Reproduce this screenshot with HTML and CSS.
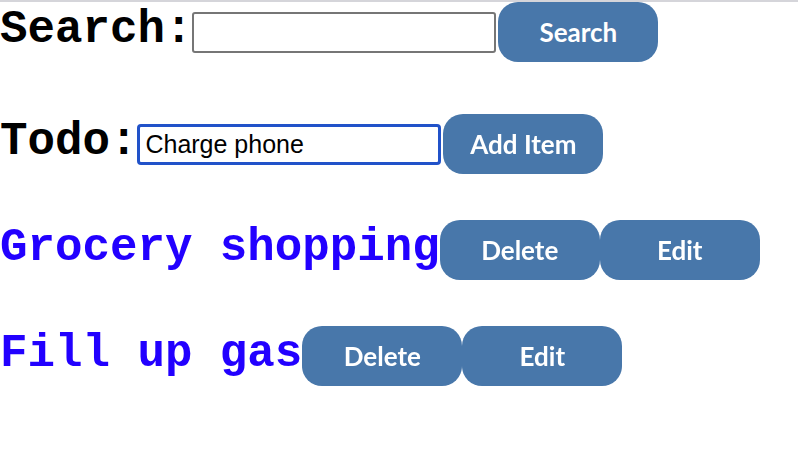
FILE: index.html
```html
<!DOCTYPE html>
<html>
<head>
<meta charset="utf-8">
<link rel="stylesheet" href="styles.css">
</head>
<body>
<div class="topline"></div>
<main class="app">
  <div class="row row-search">
    <label class="label">Search:</label><input class="field" type="text"><button class="btn">Search</button>
  </div>
  <div class="row row-todo">
    <label class="label">Todo:</label><input class="field field-focus" type="text" value="Charge phone" autofocus><button class="btn">Add Item</button>
  </div>
  <div class="row row-item">
    <span class="item">Grocery shopping</span><button class="btn">Delete</button><button class="btn">Edit</button>
  </div>
  <div class="row row-item">
    <span class="item">Fill up gas</span><button class="btn">Delete</button><button class="btn">Edit</button>
  </div>
</main>
</body>
</html>
```

FILE: styles.css
```css
html, body {
  margin: 0;
  padding: 0;
  background: #ffffff;
}

.topline {
  height: 2px;
  background: #d5d5da;
}

.app {
  display: flex;
  flex-direction: column;
}

.row {
  display: flex;
  align-items: baseline;
}

.row-todo {
  margin-top: 52px;
}

.row-item {
  margin-top: 46px;
}

.label,
.item {
  font-family: "Liberation Mono", "Courier New", monospace;
  font-weight: bold;
  font-size: 45.8px;
  color: #000000;
}

.item {
  color: #2200ff;
}

.field {
  box-sizing: border-box;
  width: 304px;
  height: 41px;
  margin: 0 2px 0 0;
  padding: 0 6px;
  border: 2px solid #767676;
  border-radius: 3px;
  font-family: "Liberation Sans", Arial, sans-serif;
  font-size: 25px;
  color: #000000;
  outline: none;
  align-self: center;
}

.field-focus {
  border: 3px solid #2152c9;
  border-radius: 4px;
  padding: 0 5px;
}

.btn {
  box-sizing: border-box;
  width: 160px;
  height: 60px;
  border: none;
  border-radius: 20px;
  background: #4877aa;
  color: #ffffff;
  font-family: Lato, "Open Sans", sans-serif;
  font-weight: bold;
  font-size: 26px;
  padding: 0;
  margin: 0;
  cursor: pointer;
}
```
